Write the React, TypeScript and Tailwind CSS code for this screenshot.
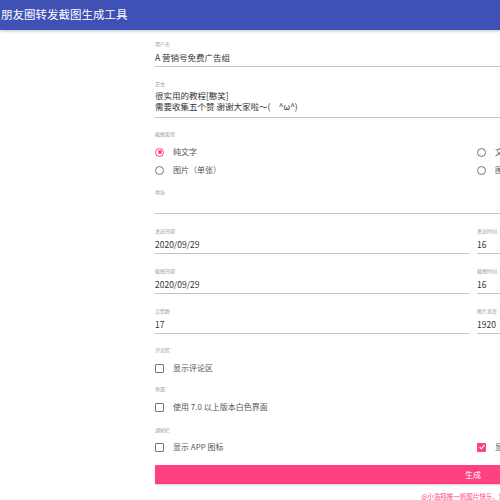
import React from 'react';

const font = { fontFamily: '"Noto Sans CJK SC", "Noto Sans", sans-serif' };

interface FieldProps {
  label: string;
  value?: string;
  className?: string;
}

const Label = ({ text, className = '' }: { text: string; className?: string }) => (
  <div className={`h-[8px] leading-[8px] text-[5px] text-[#9e9e9e] whitespace-nowrap ${className}`}>
    {text}
  </div>
);

const Field = ({ label, value, className = '' }: FieldProps) => (
  <div className={`border-b border-[#c4c4c4] pb-[2px] ${className}`}>
    <Label text={label} />
    <div className="mt-[3px] h-[13px] leading-[13px] text-[8.5px] text-[#333] whitespace-nowrap">
      {value}
    </div>
  </div>
);

const Radio = ({ checked, label }: { checked?: boolean; label: string }) => (
  <div className="flex items-center h-[18px] gap-[9px]">
    <span
      className={`w-[9px] h-[9px] rounded-full border-[1.5px] flex items-center justify-center shrink-0 ${
        checked ? 'border-[#ff4081]' : 'border-[#757575]'
      }`}
    >
      {checked && <span className="w-[4px] h-[4px] rounded-full bg-[#ff4081]" />}
    </span>
    <span className="text-[8px] text-[#555] whitespace-nowrap">{label}</span>
  </div>
);

const Checkbox = ({ checked, label }: { checked?: boolean; label: string }) => (
  <div className="flex items-center h-[18px] gap-[9px]">
    {checked ? (
      <span className="w-[9px] h-[9px] rounded-[1px] bg-[#ff4081] flex items-center justify-center shrink-0">
        <svg viewBox="0 0 10 10" className="w-[8px] h-[8px]">
          <path d="M2 5.2 L4.1 7.2 L8 2.8" fill="none" stroke="white" strokeWidth="1.4" />
        </svg>
      </span>
    ) : (
      <span className="w-[9px] h-[9px] rounded-[1px] border-[1.5px] border-[#757575] shrink-0" />
    )}
    <span className="text-[8px] text-[#555] whitespace-nowrap">{label}</span>
  </div>
);

const Row = ({ children, className = '' }: { children: React.ReactNode; className?: string }) => (
  <div className={`grid grid-cols-2 gap-x-[8px] ${className}`}>{children}</div>
);

export default function App() {
  return (
    <div className="w-[500px] h-[500px] overflow-hidden bg-white" style={font}>
      <header className="h-[30px] bg-[#3f51b5] flex items-center pl-[1px] shadow-[0_1px_3px_rgba(0,0,0,0.25)]">
        <span className="text-white text-[11.5px] whitespace-nowrap">朋友圈转发截图生成工具</span>
      </header>

      <main className="ml-[155px] w-[636px]">
        <Field className="mt-[10px]" label="用户名" value="A 营销号免费广告组" />

        <div className="mt-[13px] border-b border-[#c4c4c4] pb-[5px]">
          <Label text="正文" />
          <div className="mt-[2px] text-[8.5px] leading-[11px] text-[#333]">
            <div>很实用的教程[憨笑]</div>
            <div>需要收集五个赞 谢谢大家啦～(　^ω^)</div>
          </div>
        </div>

        <Label className="mt-[12px]" text="截图类型" />
        <Row className="mt-[5px]">
          <div>
            <Radio checked label="纯文字" />
            <Radio label="图片（单张）" />
          </div>
          <div>
            <Radio label="文字+图片" />
            <Radio label="图片（多张）" />
          </div>
        </Row>

        <div className="mt-[9px] border-b border-[#c4c4c4]">
          <Label text="地址" />
          <div className="mt-[3px] h-[14px]" />
        </div>

        <Row className="mt-[13px]">
          <Field label="发送日期" value="2020/09/29" />
          <Field label="发送时间" value="16" />
        </Row>
        <Row className="mt-[13px]">
          <Field label="截图日期" value="2020/09/29" />
          <Field label="截图时间" value="16" />
        </Row>
        <Row className="mt-[13px]">
          <Field label="点赞数" value="17" />
          <Field label="图片宽度" value="1920" />
        </Row>

        <Label className="mt-[12px]" text="评论区" />
        <div className="mt-[5px]">
          <Checkbox label="显示评论区" />
        </div>

        <Label className="mt-[8px]" text="界面" />
        <div className="mt-[5px]">
          <Checkbox label="使用 7.0 以上版本白色界面" />
        </div>

        <Label className="mt-[10px]" text="通知栏" />
        <Row className="mt-[4px]">
          <Checkbox label="显示 APP 图标" />
          <Checkbox checked label="显示电量" />
        </Row>

        <button className="mt-[9px] w-full h-[19px] bg-[#ff4081] text-white text-[8px] rounded-[1px] shadow-[0_1px_2px_rgba(0,0,0,0.2)]">
          生成
        </button>

        <div className="mt-[8px] text-center text-[6.5px] text-[#ff4081] whitespace-nowrap">
          @小浩翔推一帆图片快乐，欢迎使用
        </div>
      </main>
    </div>
  );
}
